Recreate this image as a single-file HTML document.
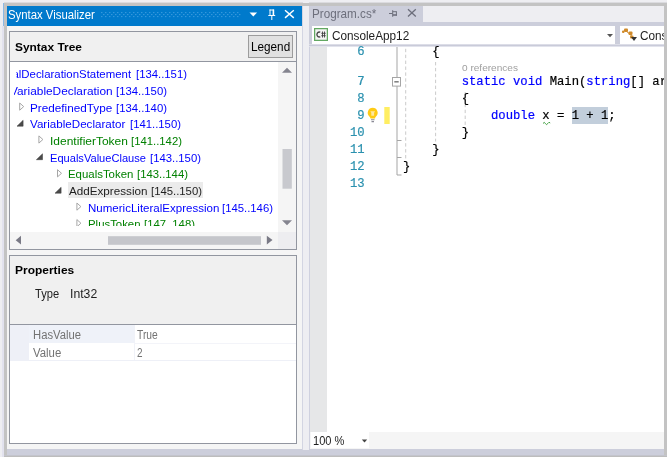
<!DOCTYPE html>
<html><head><meta charset="utf-8"><title>Syntax Visualizer</title>
<style>
html,body{margin:0;padding:0}
body{width:667px;height:457px;overflow:hidden;background:#eeeef2;position:relative;font-family:"Liberation Sans", sans-serif;}
.a{position:absolute;display:block}
.t{position:absolute;white-space:pre;line-height:normal;transform-origin:0 0;display:block;filter:blur(.35px)}
.c{position:absolute;overflow:hidden}
.m{font-family:"Liberation Mono", monospace;filter:blur(.2px);-webkit-text-stroke:.2px currentColor}
</style></head><body>
<div class="a" style="left:4px;top:3px;width:663px;height:3px;background:#c3c3c3;"></div>
<div class="a" style="left:4px;top:2px;width:299px;height:1px;background:#dbdbdf;"></div>
<div class="a" style="left:309px;top:2px;width:358px;height:1px;background:#dbdbdf;"></div>
<div class="a" style="left:4px;top:3px;width:3px;height:454px;background:#c3c3c3;"></div>
<div class="a" style="left:664px;top:3px;width:3px;height:454px;background:#c3c3c3;"></div>
<div class="a" style="left:3px;top:3px;width:1px;height:23px;background:#8db9e4;"></div>
<div class="a" style="left:2px;top:26px;width:2px;height:431px;background:#e2e2ee;"></div>
<div class="a" style="left:7px;top:6px;width:295px;height:443px;background:#f5f5f5;"></div>
<div class="a" style="left:7px;top:6px;width:295px;height:20px;background:#007acc;"></div>
<div class="a" style="left:302px;top:6px;width:1px;height:444px;background:#d3d5e2;"></div>
<div class="a" style="left:309px;top:6px;width:1px;height:444px;background:#cfd1df;"></div>
<div class="a" style="left:7px;top:449px;width:295px;height:6px;background:#cccedb;"></div>
<div class="a" style="left:309px;top:449px;width:355px;height:6px;background:#cccedb;"></div>
<div class="a" style="left:302px;top:450px;width:7px;height:5px;background:#cccedb;"></div>
<div class="a" style="left:4px;top:455px;width:663px;height:1px;background:#c3c4cc;"></div>
<div class="a" style="left:4px;top:456px;width:663px;height:1px;background:#bdbdbd;"></div>
<div class="a" style="left:9px;top:31px;width:288px;height:219px;background:#9296a0;"></div>
<div class="a" style="left:10px;top:32px;width:286px;height:217px;background:#f0f0f0;"></div>
<div class="a" style="left:10px;top:61px;width:286px;height:1px;background:#9296a0;"></div>
<div class="a" style="left:10px;top:62px;width:286px;height:187px;background:#f5f5f5;"></div>
<div class="a" style="left:10px;top:62px;width:268.3px;height:170px;background:#fff;"></div>
<div class="a" style="left:278.3px;top:232px;width:17.7px;height:17px;background:#ededf0;"></div>
<div class="a" style="left:248px;top:35px;width:45px;height:23px;background:#9c9c9c;"></div>
<div class="a" style="left:249px;top:36px;width:43px;height:21px;background:#e1e1e1;"></div>
<div class="a" style="left:67.5px;top:182px;width:135px;height:16px;background:#ebebeb;"></div>
<div class="a" style="left:9px;top:255px;width:288px;height:189px;background:#9296a0;"></div>
<div class="a" style="left:10px;top:256px;width:286px;height:187px;background:#f0f0f0;"></div>
<div class="a" style="left:10px;top:324px;width:286px;height:1px;background:#9296a0;"></div>
<div class="a" style="left:10px;top:325px;width:286px;height:118px;background:#fff;"></div>
<div class="a" style="left:10px;top:325px;width:19px;height:36px;background:#eef0f7;"></div>
<div class="a" style="left:29px;top:325px;width:105px;height:18px;background:#eff2f9;"></div>
<div class="a" style="left:134px;top:325px;width:1px;height:36px;background:#f0f2f8;"></div>
<div class="a" style="left:134px;top:343px;width:162px;height:1px;background:#f3f4f9;"></div>
<div class="a" style="left:10px;top:360px;width:286px;height:1px;background:#eef0f7;"></div>
<div class="a" style="left:309px;top:6px;width:355px;height:16px;background:#eeeef2;"></div>
<div class="a" style="left:309px;top:6px;width:114px;height:20px;background:#cccedb;"></div>
<div class="a" style="left:309px;top:22px;width:355px;height:4px;background:#cccedb;"></div>
<div class="a" style="left:309px;top:26px;width:355px;height:21px;background:#cccedb;"></div>
<div class="a" style="left:312px;top:26px;width:303px;height:18px;background:#fff;"></div>
<div class="a" style="left:620px;top:26px;width:44px;height:18px;background:#fff;"></div>
<div class="a" style="left:309px;top:44px;width:355px;height:1px;background:#dcdde7;"></div>
<div class="a" style="left:309px;top:45px;width:355px;height:1px;background:#c9cbd9;"></div>
<div class="a" style="left:309px;top:46px;width:355px;height:1px;background:#e2e3ec;"></div>
<div class="a" style="left:310px;top:47px;width:354px;height:385px;background:#fff;"></div>
<div class="a" style="left:310px;top:47px;width:17px;height:385px;background:#e6e7e8;"></div>
<div class="a" style="left:310px;top:432px;width:354px;height:17px;background:#f5f5f5;"></div>
<div class="a" style="left:311px;top:432px;width:58px;height:16px;background:#fff;"></div>
<div class="a" style="left:571.7px;top:107px;width:36.7px;height:17px;background:#c2cedb;"></div>
<svg class="a" style="left:0;top:0" width="667" height="30" fill="#55a9e6"><rect x="101.3" y="12.1" width="1" height="1"/><rect x="105.3" y="12.1" width="1" height="1"/><rect x="109.3" y="12.1" width="1" height="1"/><rect x="113.3" y="12.1" width="1" height="1"/><rect x="117.3" y="12.1" width="1" height="1"/><rect x="121.3" y="12.1" width="1" height="1"/><rect x="125.3" y="12.1" width="1" height="1"/><rect x="129.3" y="12.1" width="1" height="1"/><rect x="133.3" y="12.1" width="1" height="1"/><rect x="137.3" y="12.1" width="1" height="1"/><rect x="141.3" y="12.1" width="1" height="1"/><rect x="145.3" y="12.1" width="1" height="1"/><rect x="149.3" y="12.1" width="1" height="1"/><rect x="153.3" y="12.1" width="1" height="1"/><rect x="157.3" y="12.1" width="1" height="1"/><rect x="161.3" y="12.1" width="1" height="1"/><rect x="165.3" y="12.1" width="1" height="1"/><rect x="169.3" y="12.1" width="1" height="1"/><rect x="173.3" y="12.1" width="1" height="1"/><rect x="177.3" y="12.1" width="1" height="1"/><rect x="181.3" y="12.1" width="1" height="1"/><rect x="185.3" y="12.1" width="1" height="1"/><rect x="189.3" y="12.1" width="1" height="1"/><rect x="193.3" y="12.1" width="1" height="1"/><rect x="197.3" y="12.1" width="1" height="1"/><rect x="201.3" y="12.1" width="1" height="1"/><rect x="205.3" y="12.1" width="1" height="1"/><rect x="209.3" y="12.1" width="1" height="1"/><rect x="213.3" y="12.1" width="1" height="1"/><rect x="217.3" y="12.1" width="1" height="1"/><rect x="221.3" y="12.1" width="1" height="1"/><rect x="225.3" y="12.1" width="1" height="1"/><rect x="229.3" y="12.1" width="1" height="1"/><rect x="233.3" y="12.1" width="1" height="1"/><rect x="237.3" y="12.1" width="1" height="1"/><rect x="103.3" y="14.1" width="1" height="1"/><rect x="107.3" y="14.1" width="1" height="1"/><rect x="111.3" y="14.1" width="1" height="1"/><rect x="115.3" y="14.1" width="1" height="1"/><rect x="119.3" y="14.1" width="1" height="1"/><rect x="123.3" y="14.1" width="1" height="1"/><rect x="127.3" y="14.1" width="1" height="1"/><rect x="131.3" y="14.1" width="1" height="1"/><rect x="135.3" y="14.1" width="1" height="1"/><rect x="139.3" y="14.1" width="1" height="1"/><rect x="143.3" y="14.1" width="1" height="1"/><rect x="147.3" y="14.1" width="1" height="1"/><rect x="151.3" y="14.1" width="1" height="1"/><rect x="155.3" y="14.1" width="1" height="1"/><rect x="159.3" y="14.1" width="1" height="1"/><rect x="163.3" y="14.1" width="1" height="1"/><rect x="167.3" y="14.1" width="1" height="1"/><rect x="171.3" y="14.1" width="1" height="1"/><rect x="175.3" y="14.1" width="1" height="1"/><rect x="179.3" y="14.1" width="1" height="1"/><rect x="183.3" y="14.1" width="1" height="1"/><rect x="187.3" y="14.1" width="1" height="1"/><rect x="191.3" y="14.1" width="1" height="1"/><rect x="195.3" y="14.1" width="1" height="1"/><rect x="199.3" y="14.1" width="1" height="1"/><rect x="203.3" y="14.1" width="1" height="1"/><rect x="207.3" y="14.1" width="1" height="1"/><rect x="211.3" y="14.1" width="1" height="1"/><rect x="215.3" y="14.1" width="1" height="1"/><rect x="219.3" y="14.1" width="1" height="1"/><rect x="223.3" y="14.1" width="1" height="1"/><rect x="227.3" y="14.1" width="1" height="1"/><rect x="231.3" y="14.1" width="1" height="1"/><rect x="235.3" y="14.1" width="1" height="1"/><rect x="239.3" y="14.1" width="1" height="1"/><rect x="101.3" y="16.1" width="1" height="1"/><rect x="105.3" y="16.1" width="1" height="1"/><rect x="109.3" y="16.1" width="1" height="1"/><rect x="113.3" y="16.1" width="1" height="1"/><rect x="117.3" y="16.1" width="1" height="1"/><rect x="121.3" y="16.1" width="1" height="1"/><rect x="125.3" y="16.1" width="1" height="1"/><rect x="129.3" y="16.1" width="1" height="1"/><rect x="133.3" y="16.1" width="1" height="1"/><rect x="137.3" y="16.1" width="1" height="1"/><rect x="141.3" y="16.1" width="1" height="1"/><rect x="145.3" y="16.1" width="1" height="1"/><rect x="149.3" y="16.1" width="1" height="1"/><rect x="153.3" y="16.1" width="1" height="1"/><rect x="157.3" y="16.1" width="1" height="1"/><rect x="161.3" y="16.1" width="1" height="1"/><rect x="165.3" y="16.1" width="1" height="1"/><rect x="169.3" y="16.1" width="1" height="1"/><rect x="173.3" y="16.1" width="1" height="1"/><rect x="177.3" y="16.1" width="1" height="1"/><rect x="181.3" y="16.1" width="1" height="1"/><rect x="185.3" y="16.1" width="1" height="1"/><rect x="189.3" y="16.1" width="1" height="1"/><rect x="193.3" y="16.1" width="1" height="1"/><rect x="197.3" y="16.1" width="1" height="1"/><rect x="201.3" y="16.1" width="1" height="1"/><rect x="205.3" y="16.1" width="1" height="1"/><rect x="209.3" y="16.1" width="1" height="1"/><rect x="213.3" y="16.1" width="1" height="1"/><rect x="217.3" y="16.1" width="1" height="1"/><rect x="221.3" y="16.1" width="1" height="1"/><rect x="225.3" y="16.1" width="1" height="1"/><rect x="229.3" y="16.1" width="1" height="1"/><rect x="233.3" y="16.1" width="1" height="1"/><rect x="237.3" y="16.1" width="1" height="1"/></svg>
<svg class="a" style="left:0;top:0" width="667" height="30" viewBox="0 0 667 30"><path d="M249.500 12.500h7.600l-3.800 3.900z" fill="#fff"/><g fill="none" stroke="#fff" stroke-width="1"><path d="M270 9.500v6M269.500 10h4.500M268.300 15.500h6.900M271.800 16v4"/><path d="M273.400 9.500v6" stroke-width="1.600"/></g><path d="M285 10.300l8.800 7.600M293.800 10.300l-8.800 7.600" stroke="#fff" stroke-width="1.400" fill="none"/></svg>
<svg class="a" style="left:0;top:0" width="667" height="260" viewBox="0 0 667 260"><g fill="#84848f"><path d="M282 72.800L287 67.700l5 5.100z"/><path d="M282 220.300h10l-5 5z"/><path d="M21 235.800L15.700 240.200 21 244.600z" fill="#7a7a86"/><path d="M266.800 235.700l5.700 4.400-5.700 4.400z" fill="#7a7a86"/></g><rect x="282.500" y="149" width="9.300" height="39.700" fill="#c8c9ce"/><rect x="108" y="236.200" width="153" height="8.600" fill="#c5c6cb"/></svg>
<svg class="a" style="left:0;top:0" width="667" height="30" viewBox="0 0 667 30"><g fill="none" stroke="#6d6f7c" stroke-width="1"><path d="M389 13.500h3.500M392.700 10.200v6.600M392.700 11.700h4M396.400 11.500v4.200"/><path d="M392.700 15h4.200" stroke-width="1.600"/><path d="M408 9.200l7.800 7.300M415.800 9.200l-7.800 7.300" stroke-width="1.300"/></g></svg>
<svg class="a" style="left:314px;top:28px" width="14" height="13" viewBox="0 0 14 13"><rect x="0.500" y="0.500" width="13" height="12" fill="#f4f4f4" stroke="#62a862" stroke-width="1.500"/><path d="M6.300 4.300A2.300 2.500 0 1 0 6.300 8.700" fill="none" stroke="#424242" stroke-width="1.300"/><path d="M8.500 3.500v6M10.500 3.500v6M7.300 5.300h4.400M7.300 7.700h4.400" stroke="#424242" stroke-width="0.900" fill="none"/></svg>
<svg class="a" style="left:606px;top:33px" width="8" height="5" viewBox="0 0 8 5"><path d="M1 1h6L4 4.200z" fill="#555"/></svg>
<svg class="a" style="left:621px;top:27px" width="18" height="16" viewBox="0 0 18 16"><g fill="#d08a2a"><rect x="3" y="1.500" width="4" height="3.500" rx="1"/><rect x="7.500" y="4.500" width="4" height="3.500" rx="1"/><rect x="9" y="8.500" width="3.500" height="3" rx="1"/><rect x="1" y="3.500" width="2.500" height="2.500" rx="1"/></g><path d="M5 4l5 4 1 3" stroke="#d08a2a" stroke-width="1" fill="none"/><path d="M10 10h6l-3 4z" fill="#333"/></svg>
<svg class="a" style="left:361px;top:439px" width="7" height="4" viewBox="0 0 7 4"><path d="M0.800 0.500h5.400L3.500 3.400z" fill="#444"/></svg>
<svg class="a" style="left:0;top:0" width="667" height="200" viewBox="0 0 667 200"><g stroke="#a5a5a5" stroke-width="1" fill="none"><path d="M397 47V175h4.500"/><path d="M397 140.500h4.500M397 157.500h4.500"/><rect x="392.500" y="77.500" width="8" height="8.600" fill="#fff"/><path d="M394.300 81.800h4.400" stroke="#7d7d7d" stroke-width="1.500"/></g><g stroke="#bcbcbc" stroke-width=".800" stroke-dasharray="3.400 2.500" fill="none"><path d="M405.700 48.800V158.500"/><path d="M435.600 62V141.500"/><path d="M465.200 92V125"/></g><path d="M543 123.500q1.200-2.200 2.400 0t2.400 0 2.400-.5" stroke="#3c9e3c" stroke-width="1" fill="none"/><rect x="384.300" y="107" width="5.400" height="17" fill="#ffee62"/><path d="M372.700 107.700a5 5 0 0 0-3.300 8.700c.700.700 1 1.300 1 2.100h4.600c0-.800.300-1.400 1-2.100a5 5 0 0 0-3.300-8.700z" fill="#ffcb14"/><path d="M370.300 111.300h4.800l-1 1.400v3h-2.800v-3z" fill="#ffe8a0"/><path d="M371 119.800h3.500M371.500 121.600h2.500" stroke="#8a8a96" stroke-width="1.100"/></svg>
<div class="c" style="left:14px;top:62px;width:265px;height:164px">
<span class="t" style="left:-19.99px;top:5.3px;font-size:11.6px;color:#0000ff;transform:scaleX(0.9847);clip-path:inset(0 0 0 22.6px);">LocalDeclarationStatement</span>
<span class="t" style="left:121.75px;top:5.3px;font-size:11.6px;color:#0000ff;transform:scaleX(0.9761);">[134..151)</span>
<span class="t" style="left:-3.83px;top:21.8px;font-size:11.6px;color:#0000ff;transform:scaleX(1.0226);">VariableDeclaration</span>
<span class="t" style="left:102.2px;top:21.8px;font-size:11.6px;color:#0000ff;transform:scaleX(0.9761);">[134..150)</span>
<span class="t" style="left:16.1px;top:38.6px;font-size:11.6px;color:#0000ff;transform:scaleX(1.0128);">PredefinedType</span>
<span class="t" style="left:101.8px;top:38.6px;font-size:11.6px;color:#0000ff;transform:scaleX(0.9761);">[134..140)</span>
<span class="t" style="left:16.4px;top:55px;font-size:11.6px;color:#0000ff;transform:scaleX(1.0022);">VariableDeclarator</span>
<span class="t" style="left:115.8px;top:55px;font-size:11.6px;color:#0000ff;transform:scaleX(0.9761);">[141..150)</span>
<span class="t" style="left:35.77px;top:71.5px;font-size:11.6px;color:#008000;transform:scaleX(1.0330);">IdentifierToken</span>
<span class="t" style="left:117.1px;top:71.5px;font-size:11.6px;color:#008000;transform:scaleX(0.9761);">[141..142)</span>
<span class="t" style="left:36.1px;top:88.5px;font-size:11.6px;color:#0000ff;transform:scaleX(0.9561);">EqualsValueClause</span>
<span class="t" style="left:135.5px;top:88.5px;font-size:11.6px;color:#0000ff;transform:scaleX(0.9761);">[143..150)</span>
<span class="t" style="left:54.1px;top:105.3px;font-size:11.6px;color:#008000;transform:scaleX(0.9843);">EqualsToken</span>
<span class="t" style="left:122.9px;top:105.3px;font-size:11.6px;color:#008000;transform:scaleX(0.9761);">[143..144)</span>
<span class="t" style="left:54.7px;top:122px;font-size:11.6px;color:#1e1e1e;transform:scaleX(1.0060);">AddExpression</span>
<span class="t" style="left:136.6px;top:122px;font-size:11.6px;color:#1e1e1e;transform:scaleX(0.9761);">[145..150)</span>
<span class="t" style="left:73.5px;top:138.6px;font-size:11.6px;color:#0000ff;transform:scaleX(0.9944);">NumericLiteralExpression</span>
<span class="t" style="left:208.3px;top:138.6px;font-size:11.6px;color:#0000ff;transform:scaleX(0.9761);">[145..146)</span>
<span class="t" style="left:73.5px;top:155.2px;font-size:11.6px;color:#008000;transform:scaleX(0.9822);">PlusToken</span>
<span class="t" style="left:129.5px;top:155.2px;font-size:11.6px;color:#008000;transform:scaleX(0.9761);">[147..148)</span>
<svg class="a" style="left:0;top:0" width="269" height="164"><path d="M5.7 41l4 3.600-4 3.600z" fill="#fff" stroke="#a6a6a6" stroke-width="1"/><path d="M9.1 58.3v5.900h-6.100z" fill="#4a4a4a" stroke="#3a3a3a" stroke-width=".5"/><path d="M24.9 73.9l4 3.600-4 3.600z" fill="#fff" stroke="#a6a6a6" stroke-width="1"/><path d="M28.5 91.8v5.900h-6.100z" fill="#4a4a4a" stroke="#3a3a3a" stroke-width=".5"/><path d="M43.5 107.7l4 3.600-4 3.600z" fill="#fff" stroke="#a6a6a6" stroke-width="1"/><path d="M47.1 125.3v5.900h-6.100z" fill="#4a4a4a" stroke="#3a3a3a" stroke-width=".5"/><path d="M62.9 141l4 3.600-4 3.600z" fill="#fff" stroke="#a6a6a6" stroke-width="1"/><path d="M62.9 157.6l4 3.600-4 3.600z" fill="#fff" stroke="#a6a6a6" stroke-width="1"/></svg>
</div>
<span class="t" style="left:8.2px;top:8.4px;font-size:12.3px;color:#fff;transform:scaleX(0.9234);">Syntax Visualizer</span>
<span class="t" style="left:15px;top:40.6px;font-size:11.5px;color:#000;font-weight:bold;transform:scaleX(1.0363);">Syntax Tree</span>
<span class="t" style="left:250.7px;top:40px;font-size:12px;color:#000;transform:scaleX(0.9779);">Legend</span>
<span class="t" style="left:15.2px;top:263.9px;font-size:11.5px;color:#000;font-weight:bold;transform:scaleX(1.0410);">Properties</span>
<span class="t" style="left:35.4px;top:287px;font-size:12px;color:#1e1e1e;transform:scaleX(0.9263);">Type</span>
<span class="t" style="left:69.68px;top:287px;font-size:12px;color:#1e1e1e;transform:scaleX(1.0186);">Int32</span>
<span class="t" style="left:32.5px;top:328px;font-size:12px;color:#737373;transform:scaleX(0.9385);">HasValue</span>
<span class="t" style="left:137.2px;top:328px;font-size:12px;color:#737373;transform:scaleX(0.8552);">True</span>
<span class="t" style="left:32.6px;top:346px;font-size:12px;color:#737373;transform:scaleX(0.9493);">Value</span>
<span class="t" style="left:137.4px;top:346px;font-size:12px;color:#737373;transform:scaleX(0.8286);">2</span>
<span class="t" style="left:312.44px;top:7px;font-size:12.2px;color:#6d6f7c;transform:scaleX(0.9592);">Program.cs*</span>
<span class="t" style="left:331.5px;top:28.5px;font-size:12px;color:#1e1e1e;transform:scaleX(0.9804);">ConsoleApp12</span>
<div class="c" style="left:639px;top:26px;width:25px;height:19px"><span class="t" style="left:0.8px;top:2.5px;font-size:12px;color:#1e1e1e;transform:scaleX(0.9804);">ConsoleApp12</span></div>
<span class="t" style="left:313px;top:433.5px;font-size:12px;color:#1e1e1e;transform:scaleX(0.9227);">100 %</span>
<span class="t m" style="left:357.37px;top:44.7px;font-size:12.22px;color:#2b91af;">6</span>
<span class="t m" style="left:357.37px;top:74.7px;font-size:12.22px;color:#2b91af;">7</span>
<span class="t m" style="left:357.37px;top:91.8px;font-size:12.22px;color:#2b91af;">8</span>
<span class="t m" style="left:357.37px;top:108.8px;font-size:12.22px;color:#2b91af;">9</span>
<span class="t m" style="left:350.03px;top:125.9px;font-size:12.22px;color:#2b91af;">10</span>
<span class="t m" style="left:350.03px;top:142.9px;font-size:12.22px;color:#2b91af;">11</span>
<span class="t m" style="left:350.03px;top:159.9px;font-size:12.22px;color:#2b91af;">12</span>
<span class="t m" style="left:350.03px;top:176.8px;font-size:12.22px;color:#2b91af;">13</span>
<span class="t m" style="left:432.33px;top:44.7px;font-size:12.22px;color:#000;">{</span>
<div class="c" style="left:403px;top:72px;width:261px;height:20px"><span class="t m" style="left:58.66px;top:2.7px;font-size:12.22px;color:#000;"><span style="color:#0000ff">static</span> <span style="color:#0000ff">void</span> Main(<span style="color:#0000ff">string</span>[] args)</span></div>
<span class="t m" style="left:461.66px;top:91.8px;font-size:12.22px;color:#000;">{</span>
<span class="t m" style="left:491px;top:108.8px;font-size:12.22px;color:#000;"><span style="color:#0000ff">double</span> x = 1 + 1;</span>
<span class="t m" style="left:461.66px;top:125.9px;font-size:12.22px;color:#000;">}</span>
<span class="t m" style="left:432.33px;top:142.9px;font-size:12.22px;color:#000;">}</span>
<span class="t m" style="left:403px;top:159.9px;font-size:12.22px;color:#000;">}</span>
<span class="t" style="left:461.9px;top:62px;font-size:9.8px;color:#a0a0a0;transform:scaleX(1.0283);">0 references</span>
</body></html>
